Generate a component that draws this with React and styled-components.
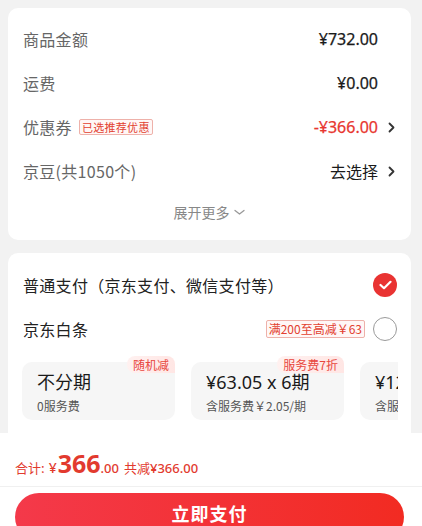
import React from "react";
import styled, { createGlobalStyle } from "styled-components";

const Global = createGlobalStyle`
  html, body { margin: 0; padding: 0; background: #f2f2f2; overflow: hidden; }
  body { font-family: "Noto Sans CJK SC", "Noto Sans", sans-serif; color: #222; }
  * { box-sizing: border-box; }
`;

const Page = styled.div`
  width: 422px;
  height: 526px;
  display: flex;
  flex-direction: column;
  padding-top: 8px;
  overflow: hidden;
`;

const Card = styled.div`
  margin: 0 11px 0 8px;
  background: #fff;
  border-radius: ${(p) => (p.$open ? "10px 10px 0 0" : "10px")};
  padding: ${(p) => p.$pad};
  margin-top: ${(p) => p.$mt || 0}px;
`;

const Row = styled.div`
  height: ${(p) => p.$h || 44}px;
  display: flex;
  align-items: center;
  justify-content: space-between;
`;

const Label = styled.div`
  font-size: 16px;
  color: ${(p) => (p.$dark ? "#222" : "#666")};
  display: flex;
  align-items: center;
  gap: 7px;
  letter-spacing: 0.3px;
`;

const Tag = styled.span`
  font-size: 11px;
  line-height: 14px;
  padding: 0 2px;
  color: #e2402f;
  border: 1px solid #eeb1aa;
  background: #fff7f6;
  border-radius: 2px;
  white-space: nowrap;
`;

const Right = styled.div`
  display: flex;
  align-items: center;
`;

const Value = styled.span`
  font-family: ${(p) => (p.$cn ? '"Noto Sans CJK SC", sans-serif' : '"Noto Sans", "Noto Sans CJK SC", sans-serif')};
  font-size: 16px;
  font-weight: 400;
  color: ${(p) => (p.$red ? "#e8362f" : "#1a1a1a")};
  -webkit-text-stroke: ${(p) => (p.$cn ? "0" : "0.25px")};
`;

const Slot = styled.span`
  width: 17px;
  display: flex;
  justify-content: flex-end;
`;

const More = styled.div`
  font-size: 14px;
  color: #888;
  display: flex;
  align-items: center;
  justify-content: center;
  gap: 4px;
  height: 38px;
`;

const Check = styled.div`
  width: 24px;
  height: 24px;
  border-radius: 50%;
  background: ${(p) => (p.$on ? "#e93332" : "#fff")};
  border: ${(p) => (p.$on ? "none" : "1px solid #9a9a9a")};
  display: flex;
  align-items: center;
  justify-content: center;
  margin-right: 3px;
`;

const Scroller = styled.div`
  display: flex;
  gap: 16px;
  margin: 6px 2px 0 -1px;
  overflow: hidden;
`;

const Plan = styled.div`
  position: relative;
  flex: 0 0 153px;
  height: 58px;
  margin-top: 6px;
  background: #f6f6f6;
  border-radius: 10px;
  padding: 8px 0 0 15px;
  display: flex;
  flex-direction: column;
`;

const Badge = styled.span`
  position: absolute;
  right: 0;
  top: -6px;
  font-size: 12px;
  line-height: 17px;
  padding: 0 6px;
  color: #e8473d;
  background: linear-gradient(90deg, #fff1f0, #ffe6e4);
  border-radius: 8px 8px 0 8px;
`;

const PlanTitle = styled.div`
  font-family: "Noto Sans", "Noto Sans CJK SC", sans-serif;
  font-size: 18px;
  font-weight: 400;
  color: #1a1a1a;
  line-height: 24px;
  white-space: nowrap;
`;

const PlanSub = styled.div`
  font-size: 12px;
  color: #555;
  line-height: 18px;
  margin-top: 3px;
  white-space: nowrap;
`;

const Footer = styled.div`
  flex: 1;
  background: #fff;
`;

const Total = styled.div`
  height: 54px;
  padding: 6px 15px 0;
  display: flex;
  align-items: baseline;
  align-content: center;
  flex-wrap: wrap;
  color: #e23a2e;
  border-bottom: 1px solid #f0f0f0;
  font-size: 13px;
`;

const Big = styled.span`
  font-family: "Noto Sans", sans-serif;
  font-size: 25px;
  font-weight: 700;
  margin-left: 1px;
`;

const Small = styled.span`
  font-family: ${(p) => (p.$cn ? '"Noto Sans CJK SC", sans-serif' : '"Noto Sans", "Noto Sans CJK SC", sans-serif')};
  font-size: ${(p) => p.$s || 13}px;
  font-weight: ${(p) => (p.$cn ? 400 : 500)};
  margin-left: ${(p) => p.$ml || 0}px;
`;

const PayButton = styled.button`
  display: block;
  margin: 6px 18px 0 15px;
  width: 389px;
  height: 48px;
  border: none;
  border-radius: 24px;
  background: linear-gradient(90deg, #f4394a, #f22b22);
  color: #fff;
  font-family: "Noto Sans CJK SC", sans-serif;
  font-size: 18px;
  font-weight: 700;
  letter-spacing: 1px;
  padding: 0 0 8px;
`;

const Chevron = () => (
  <svg width="7" height="11" viewBox="0 0 7 11">
    <path d="M1.5 1.5 L5.5 5.5 L1.5 9.5" fill="none" stroke="#333" strokeWidth="1.8" strokeLinecap="round" strokeLinejoin="round" />
  </svg>
);

const Down = () => (
  <svg width="11" height="7" viewBox="0 0 11 7">
    <path d="M1 1.5 L5.5 5 L10 1.5" fill="none" stroke="#999" strokeWidth="1.3" strokeLinecap="round" strokeLinejoin="round" />
  </svg>
);

const Tick = () => (
  <svg width="13" height="10" viewBox="0 0 13 10">
    <path d="M1.5 5 L5 8.2 L11.5 1.8" fill="none" stroke="#fff" strokeWidth="2.2" strokeLinecap="round" strokeLinejoin="round" />
  </svg>
);

const rows = [
  { label: "商品金额", value: "¥732.00" },
  { label: "运费", value: "¥0.00" },
  { label: "优惠券", tag: "已选推荐优惠", value: "-¥366.00", red: true, arrow: true },
  { label: "京豆(共1050个)", value: "去选择", arrow: true, cn: true },
];

const plans = [
  { title: "不分期", sub: "0服务费", badge: "随机减" },
  { title: "¥63.05 x 6期", sub: "含服务费￥2.05/期", badge: "服务费7折" },
  { title: "¥124.87 x 3期", sub: "含服务费￥2.87/期" },
];

export default function App() {
  return (
    <Page>
      <Global />
      <Card $pad="9px 16px 9px 15px">
        {rows.map((r) => (
          <Row key={r.label}>
            <Label>
              {r.label}
              {r.tag && <Tag>{r.tag}</Tag>}
            </Label>
            <Right>
              <Value $red={r.red} $cn={r.cn}>
                {r.value}
              </Value>
              <Slot>{r.arrow && <Chevron />}</Slot>
            </Right>
          </Row>
        ))}
        <More>
          展开更多 <Down />
        </More>
      </Card>
      <Card $open $mt={13} $pad="10px 11px 13px 15px">
        <Row>
          <Label $dark>普通支付（京东支付、微信支付等）</Label>
          <Check $on>
            <Tick />
          </Check>
        </Row>
        <Row $h={43}>
          <Label $dark>京东白条</Label>
          <Right>
            <Tag style={{ fontSize: 12, lineHeight: "16px", marginRight: 8 }}>满200至高减￥63</Tag>
            <Check />
          </Right>
        </Row>
        <Scroller>
          {plans.map((p) => (
            <Plan key={p.title}>
              {p.badge && <Badge>{p.badge}</Badge>}
              <PlanTitle>{p.title}</PlanTitle>
              <PlanSub>{p.sub}</PlanSub>
            </Plan>
          ))}
        </Scroller>
      </Card>
      <Footer>
        <Total>
          <Small $cn>合计:</Small>
          <Small $s={14} $ml={4}>¥</Small>
          <Big>366</Big>
          <Small>.00</Small>
          <Small $cn $ml={5}>共减</Small>
          <Small>¥366.00</Small>
        </Total>
        <PayButton>立即支付</PayButton>
      </Footer>
    </Page>
  );
}
